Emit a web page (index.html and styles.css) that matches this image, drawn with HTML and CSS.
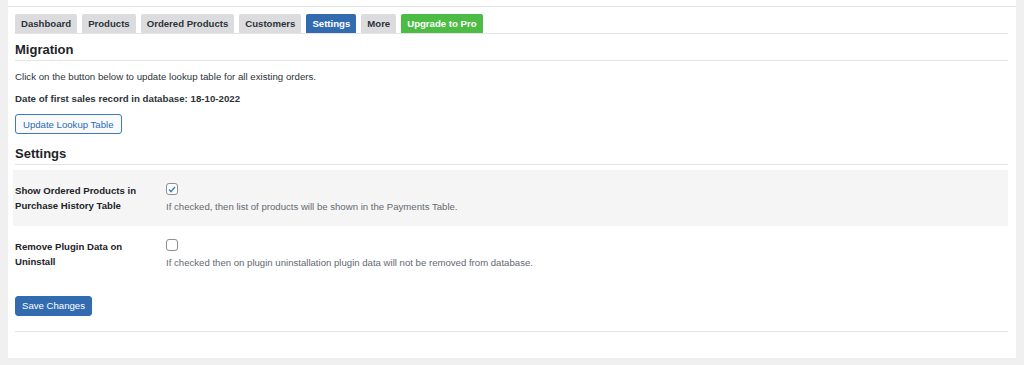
FILE: index.html
```html
<!DOCTYPE html>
<html lang="en">

<head>
    <meta charset="UTF-8">
    <meta name="viewport" content="width=device-width, initial-scale=1.0">
    <title>Settings</title>
    <link rel="stylesheet" href="styles.css">
</head>

<body>
    <div class="wrap">
        <div class="panel">
            <nav class="tabs">
                <a class="tab">Dashboard</a>
                <a class="tab">Products</a>
                <a class="tab">Ordered Products</a>
                <a class="tab">Customers</a>
                <a class="tab active">Settings</a>
                <a class="tab">More</a>
                <a class="tab pro">Upgrade to Pro</a>
            </nav>

            <h2 class="section-title">Migration</h2>
            <p class="note">Click on the button below to update lookup table for all existing orders.</p>
            <p class="note strong">Date of first sales record in database: 18-10-2022</p>
            <button class="btn-outline">Update Lookup Table</button>

            <h2 class="section-title">Settings</h2>
            <div class="form-row shaded">
                <div class="label">Show Ordered Products in Purchase History Table</div>
                <div class="field">
                    <span class="check checked">
                        <svg width="8" height="7" viewBox="0 0 8 7"><path d="M1 3.6l2 2L7 1" fill="none" stroke="#3582c4" stroke-width="1.4"/></svg>
                    </span>
                    <p class="desc">If checked, then list of products will be shown in the Payments Table.</p>
                </div>
            </div>
            <div class="form-row">
                <div class="label">Remove Plugin Data on Uninstall</div>
                <div class="field">
                    <span class="check"></span>
                    <p class="desc">If checked then on plugin uninstallation plugin data will not be removed from database.</p>
                </div>
            </div>

            <div class="submit">
                <button class="btn-primary">Save Changes</button>
            </div>
        </div>
    </div>
</body>

</html>
```

FILE: styles.css
```css
body {
    margin: 0;
    background-color: #f0f0f1;
    font-family: "Liberation Sans", Arial, sans-serif;
    color: #1d2327;
}

.wrap {
    padding: 0 8px 7px 8px;
}

.panel {
    background-color: #fff;
    border-top: 6px solid #fff;
    box-shadow: inset 0 1px 0 #e2e2e2;
    padding: 8px 8px 26px 7px;
}

.tabs {
    display: flex;
    gap: 5px;
    border-bottom: 1px solid #e4e4e4;
}

.tab {
    background-color: #dcdcde;
    color: #2c3338;
    font-size: 9.6px;
    font-weight: bold;
    padding: 0 6px;
    height: 19px;
    line-height: 19px;
    border-radius: 2px 2px 0 0;
}

.tab.active {
    background-color: #336bb0;
    color: #fff;
}

.tab.pro {
    background-color: #4cbc45;
    color: #fff;
}

.section-title {
    font-size: 13px;
    margin: 0;
    padding: 8px 0 3px 0;
    border-bottom: 1px solid #e4e4e4;
    color: #1d2327;
}

.note {
    font-size: 9.7px;
    margin: 10px 0 0 0;
    color: #2c3338;
}

.note.strong {
    font-weight: bold;
    margin-top: 11px;
}

.btn-outline {
    margin: 10px 0 4px 0;
    font-family: inherit;
    font-size: 9.6px;
    color: #2f6ab0;
    background-color: #f8fafc;
    border: 1px solid #3f78bf;
    border-radius: 3px;
    height: 20px;
    padding: 0 7px;
}

.form-row {
    display: flex;
    padding: 12px 0 0 0;
    height: 44px;
}

.form-row.shaded {
    background-color: #f5f5f5;
    margin-top: 5px;
    margin-left: -2px;
    padding-left: 2px;
}

.label {
    width: 128px;
    margin-right: 22px;
    font-size: 9.6px;
    font-weight: bold;
    line-height: 15px;
    padding-top: 1px;
    color: #1d2327;
}

.field {
    padding-left: 1px;
    padding-top: 1px;
}

.check {
    display: flex;
    align-items: center;
    justify-content: center;
    width: 10px;
    height: 10px;
    border: 1px solid #8c8f94;
    border-radius: 3px;
    background-color: #fff;
}

.desc {
    margin: 6px 0 0 0;
    font-size: 9.6px;
    color: #646970;
}

.submit {
    padding: 13px 0 15px 0;
    border-bottom: 1px solid #e4e4e4;
}

.btn-primary {
    font-family: inherit;
    font-size: 9.6px;
    color: #fff;
    background-color: #336bb0;
    border: 1px solid #336bb0;
    border-radius: 3px;
    height: 20px;
    padding: 0 6px;
}
```
